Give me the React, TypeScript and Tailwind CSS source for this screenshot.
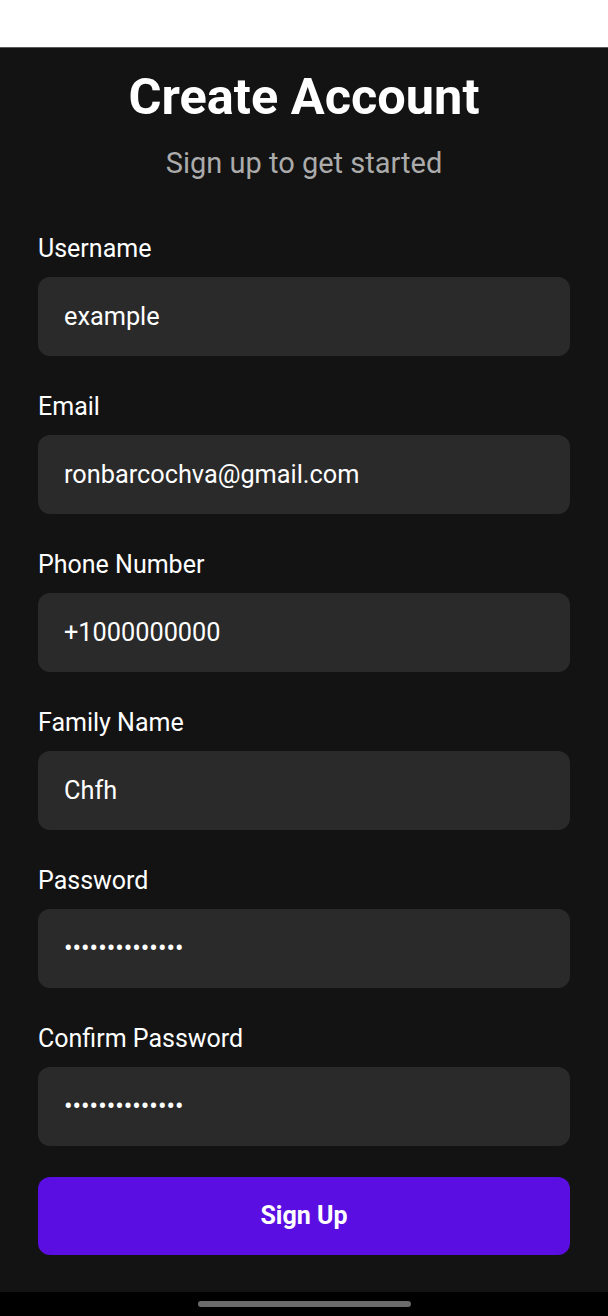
import React from 'react';

const fields = [
  { label: 'Username', value: 'example' },
  { label: 'Email', value: 'ronbarcochva@gmail.com' },
  { label: 'Phone Number', value: '+1000000000' },
  { label: 'Family Name', value: 'Chfh' },
  { label: 'Password', value: '••••••••••••••' },
  { label: 'Confirm Password', value: '••••••••••••••' },
];

const App: React.FC = () => {
  return (
    <div className="w-[608px] h-[1316px] flex flex-col font-['Roboto','Liberation_Sans',sans-serif] overflow-hidden">
      {/* status area */}
      <div className="h-[48px] bg-white border-b border-[#5a5a5a]"></div>

      <main className="flex-1 bg-[#131313] px-[38px] pt-[19px]">
        <h1 className="text-center text-white font-bold text-[50.5px] leading-[60px]">Create Account</h1>
        <p className="mt-[19px] text-center text-[#ababab] text-[29px] leading-[34px]">Sign up to get started</p>

        <form className="mt-[54px] flex flex-col gap-[36px]" onSubmit={(e) => e.preventDefault()}>
          {fields.map((f) => (
            <div key={f.label} className="flex flex-col gap-[14px]">
              <label className="text-white text-[25px] leading-[29px]">{f.label}</label>
              <input
                readOnly
                value={f.value}
                className="h-[79px] w-full rounded-[12px] bg-[#2a2a2a] px-[26px] text-white text-[25.3px] outline-none"
              />
            </div>
          ))}
        </form>

        <button className="mt-[31px] w-full h-[78px] rounded-[12px] bg-[#5a0ee1] text-white font-bold text-[25px]">
          Sign Up
        </button>
      </main>

      {/* nav bar */}
      <div className="h-[24px] bg-black flex items-center justify-center">
        <div className="w-[213px] h-[6px] rounded-full bg-[#6b6b6b]"></div>
      </div>
    </div>
  );
};

export default App;
